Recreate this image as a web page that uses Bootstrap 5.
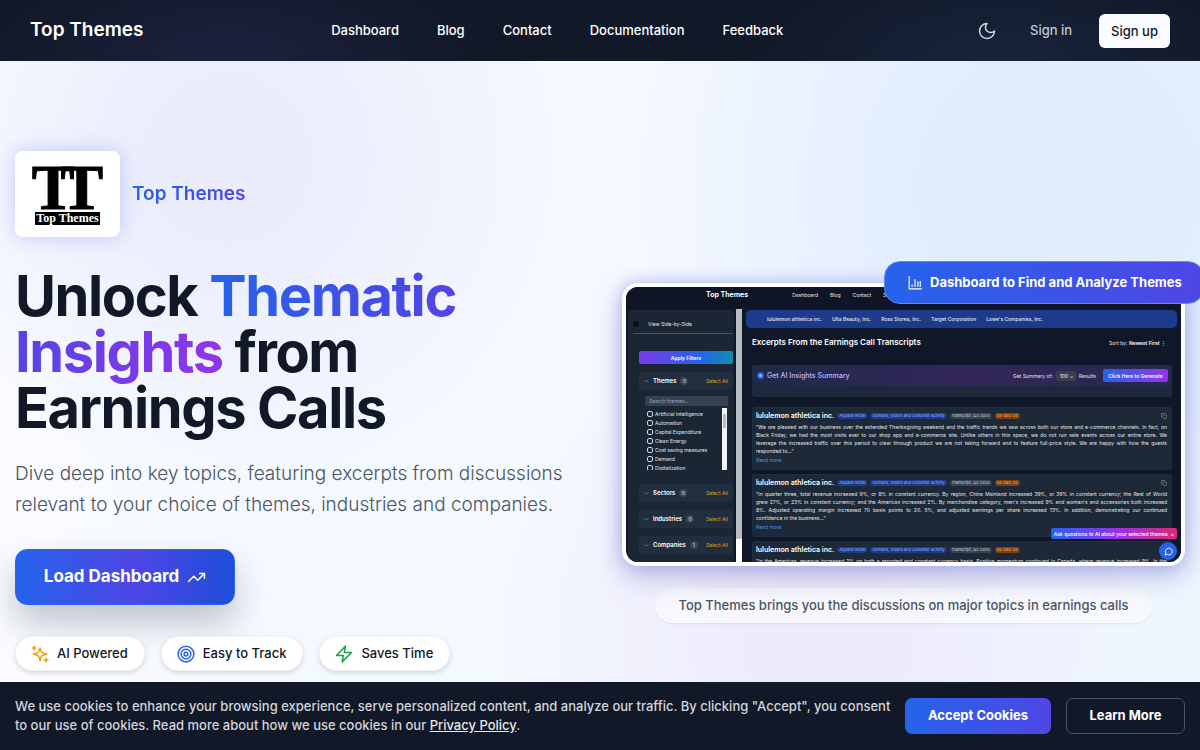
<!DOCTYPE html>
<html lang="en">
<head>
<meta charset="utf-8">
<meta name="viewport" content="width=device-width, initial-scale=1">
<title>Top Themes</title>
<link href="https://cdn.jsdelivr.net/npm/bootstrap@5.3.0/dist/css/bootstrap.min.css" rel="stylesheet">
<style>
body{font-family:Inter,"Liberation Sans",sans-serif;background:#f5f9ff;color:#111827}
button,input,select{font-family:inherit}
svg{flex:none}

/* top bar */
.site-nav{min-height:61px;padding:0 30px;background:radial-gradient(ellipse 260px 110px at 19% 100%,#1e213f,transparent),radial-gradient(ellipse 260px 110px at 83% 100%,#18243c,transparent),#111827}
.site-name{font-size:19px;font-weight:600;color:#fff;text-decoration:none}
.site-links{gap:38px}
.site-links a{font-size:13px;font-weight:500;color:#fff;text-decoration:none}
.theme-toggle{width:32px;height:32px;color:#d1d5db}
.sign-in{font-size:13px;font-weight:500;color:#c3c9d3;padding:0 11px;text-decoration:none}
.sign-up{font-size:13px;font-weight:500;line-height:20px;padding:7px 12px;background:#fafcff;color:#111827;border-radius:6px;text-decoration:none}

/* hero */
.hero{overflow:hidden;padding:90px 15px 78px;min-height:calc(100vh - 61px);
background:radial-gradient(circle 330px at 19% 14%,#ebecfc 20%,transparent),radial-gradient(circle 420px at 88% 18%,#e1edff 30%,transparent),radial-gradient(circle 330px at 69% 84%,#edebfc 20%,transparent),linear-gradient(90deg,#f9fbff,#f4f8ff 30%,#f4f8ff 60%,#eef6ff)}
.hero-row{--bs-gutter-x:44px}
.logo-tile{width:105px;height:86px;background:#fff;border-radius:8px;box-shadow:0 0 20px #a5abf599;font-family:"Liberation Serif",serif;color:#000}
.logo-tt{font-size:64px;font-weight:700;line-height:49px;-webkit-text-stroke:1px #000}
.logo-tt span+span{margin-left:-14px}
.logo-name{background:#000;color:#fff;font-size:12px;font-weight:700;line-height:13px;padding:0 1px}
.logo-label{font-size:19px;font-weight:600}
.grad-text{background:linear-gradient(90deg,#2563eb,#4f46e5);-webkit-background-clip:text;background-clip:text;color:transparent}
.grad-wide{background-image:linear-gradient(90deg,#2563eb,#4f46e5 50%,#9333ea)}
.hero-title{font-size:56px;line-height:56px;font-weight:700;margin:31px 0 22px;letter-spacing:-.025em}
.hero-copy{font-size:19px;line-height:31px;font-weight:300;color:#4b5563;margin-bottom:29px}
.load-btn{width:220px;height:56px;border:1px solid #2f62ee;border-radius:12px;font-size:17px;font-weight:700;color:#fff;background:linear-gradient(90deg,#2563eb,#4f46e5 55%,#1d4ed8);box-shadow:0 18px 34px #1118273d}
.feature-pills{gap:16px;margin-top:31px}
.feature-pill{height:35px;padding:0 16px 0 15px;border:1px solid #f1f3f7;border-radius:18px;background:#fff;font-size:13px;font-weight:500;box-shadow:0 2px 5px #11182726}
.hero-side{padding-top:132px}

/* floating label */
.callout{top:-22px;left:262px;height:43px;width:320px;border-radius:16px;padding-left:23px;font-size:13px;font-weight:700;color:#fff;border:1px solid #5a8cf5;background:linear-gradient(90deg,#2563eb,#4f46e5);white-space:nowrap;z-index:3}
.side-note{height:35px;padding:0 23px;border-radius:18px;background:#f8f9fdd9;color:#4b5563;font-size:13px;font-weight:500;margin-top:22px;box-shadow:0 1px 2px #11182714}

/* product preview */
.preview{aspect-ratio:563/283;border:4px solid #fff;border-radius:16px;overflow:hidden;background:#0f172a;color:#e5e7eb;font-size:5px;line-height:8px;box-shadow:0 0 14px #7f9cf580,0 10px 28px #7c6fc070}
.preview button,.preview select{border:0;padding:0;color:#fff;font-size:5px;line-height:8px}
.pv-top{height:22px;gap:12px;padding:0 0 6px 80px;background:#0f1526;flex:none}
.pv-top strong{font-size:7px;font-weight:700;color:#fff;margin-right:32px}
.pv-body{min-height:0}
.pv-side{width:110px;padding:1px 2px 0;flex:none}
.pv-side-in{background:#1b2635;height:100%;padding:0 1px 0 11px;border-radius:2px}
.pv-view{height:24px;padding-top:5px;margin-left:-6px;border-bottom:1px solid #4b5563;gap:9px}
.pv-dot{width:6px;height:6px;border-radius:50%;background:#0a0f1e}
.preview .pv-apply{display:block;width:100%;height:13px;margin:17px 0 8px;border-radius:2px;font-weight:600;background:linear-gradient(90deg,#7c3aed,#2563eb 65%,#0e90a8)}
.pv-group{height:18px;padding:0 5px;background:#212e3e;border-radius:2px;gap:4px}
.pv-group strong{font-size:6px;font-weight:600;color:#fff}
.pv-count{min-width:8px;border-radius:4px;text-align:center;background:#3b4757}
.preview .pv-all{color:#d9a520;margin-left:auto}
.pv-search{width:83px;height:10px;margin:6px 0 2px 6px;border:0;border-radius:2px;padding:0 4px;background:#374151;font-size:5px;line-height:10px;display:block}
.pv-search::placeholder{color:#9ca3af;opacity:1}
.pv-list{height:62px;overflow:hidden;margin:0 6px 14px 6px}
.pv-list label{display:flex;align-items:center;gap:2px;height:9px}
.pv-list>div:first-child{padding:1px 0 0 2px}
.pv-list .form-check-input{width:6px;height:6px;min-height:0;margin:0;background-color:transparent;border:1px solid #d1d5db;border-radius:2px}
.pv-scroll{width:6px;background:#fff;flex:none}
.pv-scroll div{background:#b9bcc1}
.pv-thumb{height:91%}
.pv-list-scroll{width:5px;background:#f3f4f6;padding:6px 1px}
.pv-list-scroll div{height:14px}
.pv-main{background:#0f1729;padding:1px 4px 0 4px;min-width:0}
.pv-tabs{height:18px;background:#1e3a8a;border-radius:5px;padding-left:21px;gap:10px;font-weight:500}
.pv-sheet{padding:0 5px 0 6px}
.pv-head{height:37px;padding-right:6px;padding-bottom:7px}
.pv-head h2{font-size:8px;font-weight:600;margin:0;color:#fff}
.pv-ai{background:#1e293b;border-radius:3px;padding-bottom:11px;margin-bottom:10px}
.pv-ai-bar{height:21px;border-radius:3px 3px 0 0;background:linear-gradient(90deg,#1e2a48,#33265a 50%,#26284d);padding:0 4px 0 5px;gap:3px}
.pv-ai-title{font-size:7px;font-weight:500;color:#c4b5fd}
.pv-spark{width:7px;height:7px;border-radius:50%;background:#93c5fd;border:2px solid #2563eb}
.preview .pv-pick{background:#374151;border-radius:2px;width:20px;height:10px;padding-left:4px;appearance:none}
.preview .pv-gen{height:13px;width:65px;border-radius:2px;font-weight:600;background:linear-gradient(90deg,#2563eb,#9333ea)}
.pv-item{background:#1e2937;border:1px solid #1c2f42;border-radius:3px;padding:3px 4px 0 3px;height:63px;margin-bottom:4px;line-height:8px}
.pv-item h3{font-size:7px;line-height:10px;font-weight:600;margin:0;color:#fff}
.pv-meta{height:10px;gap:3px;margin-bottom:2px}
.pv-tag{font-size:4px;line-height:6px;padding:0 2px;border-radius:3px;background:#1e3a8a;color:#93b4fd}
.pv-tag-grey{background:#374151;color:#d1d5db}
.pv-tag-orange{background:#7c3f12;color:#fdba74}
.pv-item p{margin:0 0 1px}
.pv-line{display:block;text-align:justify;text-align-last:justify;white-space:nowrap}
.preview a{color:#4b8ff0;text-decoration:none}
.pv-ask{right:4px;bottom:23px;height:11px;border-radius:2px;padding:0 3px;gap:3px;font-weight:500;white-space:nowrap;color:#fff;background:linear-gradient(90deg,#2563eb,#9333ea 50%,#db2777)}
.preview .pv-chat{right:4px;bottom:2px;width:18px;height:18px;border-radius:50%;background:#2563eb}

/* cookie bar */
.cookie-bar{min-height:68px;padding:15px;background:#111827;z-index:5}
.cookie-text{font-size:13px;line-height:19px;font-weight:500;color:#d1d5db;margin:0}
.cookie-text a{color:#e5e7eb;text-decoration:underline}
.cookie-bar button{height:36px;border-radius:7px;font-size:13px;font-weight:700;color:#fff;white-space:nowrap}
.accept-btn{width:146px;border:0;background:linear-gradient(90deg,#2563eb,#4f46e5)}
.more-btn{width:119px;border:1px solid #4b5563;background:transparent}
</style>
</head>
<body>
<nav class="site-nav d-flex align-items-center justify-content-between">
  <a class="site-name" href="#">Top Themes</a>
  <div class="site-links d-flex">
    <a href="#">Dashboard</a><a href="#">Blog</a><a href="#">Contact</a><a href="#">Documentation</a><a href="#">Feedback</a>
  </div>
  <div class="d-flex align-items-center gap-3">
    <button class="theme-toggle btn p-0 border-0 d-flex align-items-center justify-content-center" aria-label="Toggle theme">
      <svg width="20" height="20" viewBox="0 0 24 24" fill="none" stroke="currentColor" stroke-width="1.8" stroke-linecap="round" stroke-linejoin="round"><path d="M12 3a6 6 0 0 0 9 9 9 9 0 1 1-9-9Z"/></svg>
    </button>
    <a class="sign-in" href="#">Sign in</a>
    <a class="sign-up" href="#">Sign up</a>
  </div>
</nav>

<main class="hero">
  <div class="row hero-row">
    <section class="col-6">
      <div class="d-flex align-items-center" style="gap:12px">
        <div class="logo-tile d-flex flex-column align-items-center justify-content-center">
          <div class="logo-tt d-flex"><span>T</span><span>T</span></div>
          <div class="logo-name">Top Themes</div>
        </div>
        <span class="logo-label grad-text">Top Themes</span>
      </div>
      <h1 class="hero-title">Unlock <span class="grad-text grad-wide">Thematic<br>Insights</span> from<br>Earnings Calls</h1>
      <p class="hero-copy">Dive deep into key topics, featuring excerpts from discussions relevant to your choice of themes, industries and companies.</p>
      <button class="load-btn d-flex align-items-center justify-content-center gap-2">Load Dashboard
        <svg width="19" height="19" viewBox="0 0 24 24" fill="none" stroke="currentColor" stroke-width="2" stroke-linecap="round" stroke-linejoin="round"><path d="M22 7l-8.5 8.500-5-5L2 17"/><path d="M16 7h6v6"/></svg>
      </button>
      <div class="feature-pills d-flex">
        <div class="feature-pill d-flex align-items-center gap-2">
          <svg width="18" height="18" viewBox="0 0 24 24" fill="none" stroke="#f59e0b" stroke-width="2" stroke-linecap="round" stroke-linejoin="round"><path d="M12 4l1.900 5.100a2 2 0 0 0 1.200 1.200L21 12l-5.900 1.900a2 2 0 0 0-1.200 1.200L12 21l-1.900-5.900a2 2 0 0 0-1.200-1.200L3 12l5.900-1.700a2 2 0 0 0 1.200-1.200Z"/><path d="M4 1.500v5M1.500 4h5M20 17.500v5M17.500 20h5"/></svg>AI Powered
        </div>
        <div class="feature-pill d-flex align-items-center gap-2">
          <svg width="18" height="18" viewBox="0 0 24 24" fill="none" stroke="#2563eb" stroke-width="2"><circle cx="12" cy="12" r="10.500"/><circle cx="12" cy="12" r="6.500"/><circle cx="12" cy="12" r="2.500"/></svg>Easy to Track
        </div>
        <div class="feature-pill d-flex align-items-center gap-2">
          <svg width="18" height="18" viewBox="0 0 24 24" fill="none" stroke="#16a34a" stroke-width="2" stroke-linecap="round" stroke-linejoin="round"><path d="M14 1.500L2 14h9l-1.500 8.500L22 10h-9.500z"/></svg>Saves Time
        </div>
      </div>
    </section>

    <section class="col-6 hero-side">
      <div class="position-relative">
        <div class="callout position-absolute d-flex align-items-center gap-2">
          <svg width="14" height="14" viewBox="0 0 24 24" fill="none" stroke="currentColor" stroke-width="2" stroke-linecap="round" stroke-linejoin="round"><path d="M2 1v21h21M7 18v-3M12 18V6M17 18v-8M21 18V9"/></svg>Dashboard to Find and Analyze Themes
        </div>
        <div class="preview position-relative d-flex flex-column">
          <div class="pv-top d-flex align-items-center"><strong>Top Themes</strong><span>Dashboard</span><span>Blog</span><span>Contact</span><span>Support</span></div>
          <div class="pv-body d-flex flex-grow-1">
            <div class="pv-side">
              <div class="pv-side-in">
                <div class="pv-view d-flex align-items-center"><span class="pv-dot"></span><span>View Side-by-Side</span></div>
                <button class="pv-apply">Apply Filters</button>
                <div class="pv-group d-flex align-items-center"><svg width="5" height="5" viewBox="0 0 8 8" fill="none" stroke="#9ca3af"><path d="M1 5l3-3 3 3"/></svg><strong>Themes</strong><span class="pv-count">0</span><button class="pv-all bg-transparent">Select All</button></div>
                <input class="pv-search" type="text" placeholder="Search themes..." aria-label="Search themes">
                <div class="pv-list d-flex justify-content-between">
                  <div>
                    <label><input class="form-check-input" type="checkbox">Artificial Intelligence</label>
                    <label><input class="form-check-input" type="checkbox">Automation</label>
                    <label><input class="form-check-input" type="checkbox">Capital Expenditure</label>
                    <label><input class="form-check-input" type="checkbox">Clean Energy</label>
                    <label><input class="form-check-input" type="checkbox">Cost saving measures</label>
                    <label><input class="form-check-input" type="checkbox">Demand</label>
                    <label><input class="form-check-input" type="checkbox">Digitalization</label>
                  </div>
                  <div class="pv-scroll pv-list-scroll"><div></div></div>
                </div>
                <div class="d-flex flex-column" style="gap:8px">
                  <div class="pv-group d-flex align-items-center"><svg width="5" height="5" viewBox="0 0 8 8" fill="none" stroke="#9ca3af"><path d="M1 2l3 3 3-3"/></svg><strong>Sectors</strong><span class="pv-count">0</span><button class="pv-all bg-transparent">Select All</button></div>
                  <div class="pv-group d-flex align-items-center"><svg width="5" height="5" viewBox="0 0 8 8" fill="none" stroke="#9ca3af"><path d="M1 2l3 3 3-3"/></svg><strong>Industries</strong><span class="pv-count">0</span><button class="pv-all bg-transparent">Select All</button></div>
                  <div class="pv-group d-flex align-items-center"><svg width="5" height="5" viewBox="0 0 8 8" fill="none" stroke="#9ca3af"><path d="M1 2l3 3 3-3"/></svg><strong>Companies</strong><span class="pv-count">1</span><button class="pv-all bg-transparent">Select All</button></div>
                </div>
              </div>
            </div>
            <div class="pv-scroll"><div class="pv-thumb"></div></div>
            <div class="pv-main flex-grow-1">
              <div class="pv-tabs d-flex align-items-center"><span>lululemon athletica inc.</span><span>Ulta Beauty, Inc.</span><span>Ross Stores, Inc.</span><span>Target Corporation</span><span>Lowe's Companies, Inc.</span></div>
              <div class="pv-sheet">
                <div class="pv-head d-flex align-items-center justify-content-between"><h2>Excerpts From the Earnings Call Transcripts</h2><span>Sort by: <b>Newest First</b> ⋮</span></div>
                <div class="pv-ai">
                  <div class="pv-ai-bar d-flex align-items-center"><span class="pv-spark"></span><span class="pv-ai-title me-auto">Get AI Insights Summary</span><label for="count">Get Summary of:</label><select class="pv-pick" id="count"><option>100 ⌄</option></select><span class="me-1">Results</span><button class="pv-gen">Click Here to Generate</button></div>
                </div>
                <article class="pv-item">
                  <div class="pv-meta d-flex align-items-center"><h3>lululemon athletica inc.</h3><span class="pv-tag">Apparel Retail</span><span class="pv-tag">Demand, orders and customer activity</span><span class="pv-tag pv-tag-grey">Transcript, Q3 2024</span><span class="pv-tag pv-tag-orange">05-Dec-24</span><svg class="ms-auto" width="6" height="6" viewBox="0 0 12 12" fill="none" stroke="#9ca3af"><rect x="4" y="4" width="7" height="7" rx="1"/><path d="M2 8H1V1h7v1"/></svg></div>
                  <p><span class="pv-line">"We are pleased with our business over the extended Thanksgiving weekend and the traffic trends we saw across both our store and e-commerce channels. In fact, on</span><span class="pv-line">Black Friday, we had the most visits ever to our shop app and e-commerce site. Unlike others in this space, we do not run sale events across our entire store. We</span><span class="pv-line">leverage the increased traffic over this period to clear through product we are not taking forward and to feature full-price style. We are happy with how the guests</span>responded to..."</p>
                  <a href="#">Read more</a>
                </article>
                <article class="pv-item">
                  <div class="pv-meta d-flex align-items-center"><h3>lululemon athletica inc.</h3><span class="pv-tag">Apparel Retail</span><span class="pv-tag">Demand, orders and customer activity</span><span class="pv-tag pv-tag-grey">Transcript, Q3 2024</span><span class="pv-tag pv-tag-orange">05-Dec-24</span><svg class="ms-auto" width="6" height="6" viewBox="0 0 12 12" fill="none" stroke="#9ca3af"><rect x="4" y="4" width="7" height="7" rx="1"/><path d="M2 8H1V1h7v1"/></svg></div>
                  <p><span class="pv-line">"In quarter three, total revenue increased 9%, or 8% in constant currency. By region, China Mainland increased 39%, or 36% in constant currency; the Rest of World</span><span class="pv-line">grew 27%, or 23% in constant currency; and the Americas increased 2%. By merchandise category, men's increased 9% and women's and accessories both increased</span><span class="pv-line">8%. Adjusted operating margin increased 70 basis points to 20. 5%, and adjusted earnings per share increased 13%. In addition, demonstrating our continued</span>confidence in the business..."</p>
                  <a href="#">Read more</a>
                </article>
                <article class="pv-item">
                  <div class="pv-meta d-flex align-items-center"><h3>lululemon athletica inc.</h3><span class="pv-tag">Apparel Retail</span><span class="pv-tag">Demand, orders and customer activity</span><span class="pv-tag pv-tag-grey">Transcript, Q3 2024</span><span class="pv-tag pv-tag-orange">05-Dec-24</span></div>
                  <p><span class="pv-line">"In the Americas, revenue increased 2% on both a reported and constant currency basis. Positive momentum continued in Canada, where revenue increased 9%. In the</span></p>
                </article>
              </div>
            </div>
          </div>
          <div class="pv-ask position-absolute d-flex align-items-center justify-content-between"><span>Ask questions to AI about your selected themes</span><span>×</span></div>
          <button class="pv-chat position-absolute d-flex align-items-center justify-content-center" aria-label="Chat"><svg width="9" height="9" viewBox="0 0 24 24" fill="none" stroke="#fff" stroke-width="2.500" stroke-linejoin="round"><path d="M3 21l2-5a9 9 0 1 1 4 4z"/></svg></button>
        </div>
      </div>
      <div class="d-flex justify-content-center"><div class="side-note d-flex align-items-center">Top Themes brings you the discussions on major topics in earnings calls</div></div>
    </section>
  </div>
</main>

<div class="cookie-bar fixed-bottom d-flex align-items-center">
  <p class="cookie-text flex-grow-1">We use cookies to enhance your browsing experience, serve personalized content, and analyze our traffic. By clicking "Accept", you consent to our use of cookies. Read more about how we use cookies in our <a href="#">Privacy Policy</a>.</p>
  <div class="d-flex ms-2" style="gap:15px"><button class="accept-btn">Accept Cookies</button><button class="more-btn">Learn More</button></div>
</div>
<script src="https://cdn.jsdelivr.net/npm/bootstrap@5.3.0/dist/js/bootstrap.bundle.min.js"></script>
</body>
</html>
